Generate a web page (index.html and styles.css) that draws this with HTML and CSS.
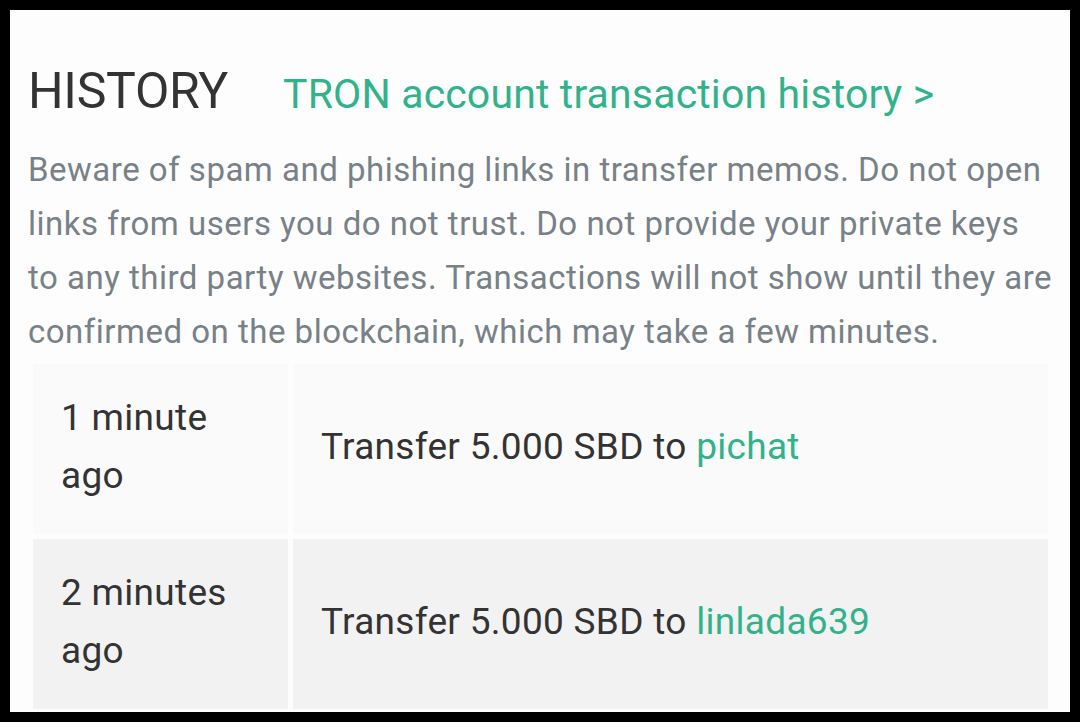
FILE: index.html
```html
<!DOCTYPE html>
<html lang="en">
<head>
  <meta charset="UTF-8" />
  <title>History</title>
  <link rel="stylesheet" href="styles.css">
</head>
<body>
  <div class="frame">
    <div class="head">
      <h2 class="title">HISTORY</h2>
      <a class="tron-link" href="#">TRON account transaction history &gt;</a>
    </div>

    <p class="warning">
      Beware of spam and phishing links in transfer memos. Do not open links from users you do not trust. Do not provide your private keys to any third party websites. Transactions will not show until they are confirmed on the blockchain, which may take a few minutes.
    </p>

    <table class="history">
      <tbody>
        <tr class="odd">
          <td class="when">1 minute ago</td>
          <td class="what">Transfer 5.000 SBD to <a href="#">pichat</a></td>
        </tr>
        <tr class="even">
          <td class="when">2 minutes ago</td>
          <td class="what">Transfer 5.000 SBD to <a href="#">linlada639</a></td>
        </tr>
      </tbody>
    </table>
  </div>
</body>
</html>
```

FILE: styles.css
```css
body {
  margin: 0;
  background: #000;
  font-family: Roboto, "Liberation Sans", sans-serif;
}

.frame {
  margin: 10px;
  height: 702px;
  overflow: hidden;
  box-sizing: border-box;
  padding: 51px 17px 0 18px;
  background: #fdfdfd;
}

.head {
  display: flex;
  align-items: baseline;
}

.title {
  margin: 0;
  font-size: 50px;
  line-height: 60px;
  font-weight: 400;
  letter-spacing: -0.3px;
  color: #333;
}

.tron-link {
  margin-left: 55px;
  font-size: 41px;
  letter-spacing: 0.15px;
  color: #32b28a;
  text-decoration: none;
}

.warning {
  margin: 22px 0 0;
  font-size: 33px;
  line-height: 54px;
  letter-spacing: 0.5px;
  color: #788187;
}

.history {
  width: 100%;
  border-spacing: 5px;
  font-size: 37px;
  line-height: 58px;
  letter-spacing: 0.3px;
  color: #333;
}

.history td {
  padding: 25px 28px 29px;
  vertical-align: middle;
}

.history .when {
  width: 199px;
}

.history .odd td {
  background: #fafafa;
}

.history .even td {
  background: #f2f2f2;
}

.history a {
  color: #32b28a;
  text-decoration: none;
}
```
